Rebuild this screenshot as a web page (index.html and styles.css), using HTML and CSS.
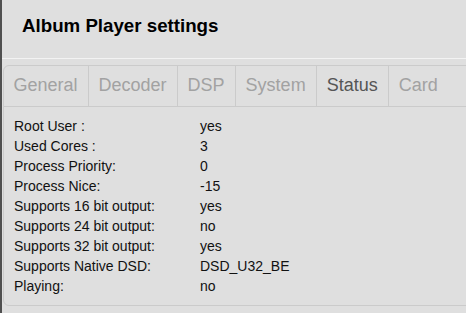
FILE: index.html
```html
<!DOCTYPE html>
<html lang="en">
<head>
<meta charset="UTF-8">
<meta name="viewport" content="width=device-width, initial-scale=1.0">
<title>Album Player settings</title>
<link rel="stylesheet" href="styles.css">
</head>
<body>

<div class="page">
    <div class="header">
        <h3>Album Player settings</h3>
    </div>

    <div class="panel">
        <ul class="tabs">
            <li>General</li>
            <li>Decoder</li>
            <li>DSP</li>
            <li>System</li>
            <li class="active">Status</li>
            <li class="last">Card</li>
        </ul>

        <table class="status">
            <tr><td class="label">Root User :</td><td>yes</td></tr>
            <tr><td class="label">Used Cores :</td><td>3</td></tr>
            <tr><td class="label">Process Priority:</td><td>0</td></tr>
            <tr><td class="label">Process Nice:</td><td>-15</td></tr>
            <tr><td class="label">Supports 16 bit output:</td><td>yes</td></tr>
            <tr><td class="label">Supports 24 bit output:</td><td>no</td></tr>
            <tr><td class="label">Supports 32 bit output:</td><td>yes</td></tr>
            <tr><td class="label">Supports Native DSD:</td><td>DSD_U32_BE</td></tr>
            <tr><td class="label">Playing:</td><td>no</td></tr>
        </table>
    </div>
</div>

</body>
</html>
```

FILE: styles.css
```css
html, body {
    margin: 0;
    padding: 0;
    height: 100%;
    overflow: hidden;
}
body {
    font-family: "Liberation Sans", Arial, sans-serif;
    background-color: #dfdfdf;
    color: #111;
}
.page {
    height: 100%;
    border-left: 2px solid #505050;
    background-color: #dfdfdf;
}
.header {
    height: 59px;
    border-bottom: 1px solid #f3f3f3;
    box-sizing: border-box;
}
.header h3 {
    margin: 0;
    padding: 15px 0 0 20px;
    font-size: 18.72px;
    line-height: 22px;
    font-weight: bold;
    color: #000;
}
.panel {
    margin: 6px -12px 0 1px;
    border: 1px solid #cbcbcb;
    border-radius: 6px;
    padding-bottom: 9px;
}
.tabs {
    list-style: none;
    margin: 0;
    padding: 0;
    display: flex;
    border-bottom: 1px solid #cbcbcb;
}
.tabs li {
    padding: 9px 10px 11px;
    font-size: 18px;
    line-height: 20px;
    color: #a2a2a2;
    border-right: 1px solid #cbcbcb;
}
.tabs li:first-child {
    padding-left: 9.5px;
}
.tabs li.active {
    color: #555;
}
.tabs li.last {
    border-right: none;
}
.status {
    border-collapse: collapse;
    margin: 9px 0 0 10px;
    font-size: 14px;
}
.status td {
    padding: 0;
    height: 20px;
    line-height: 20px;
}
.status td.label {
    width: 186px;
}
```
